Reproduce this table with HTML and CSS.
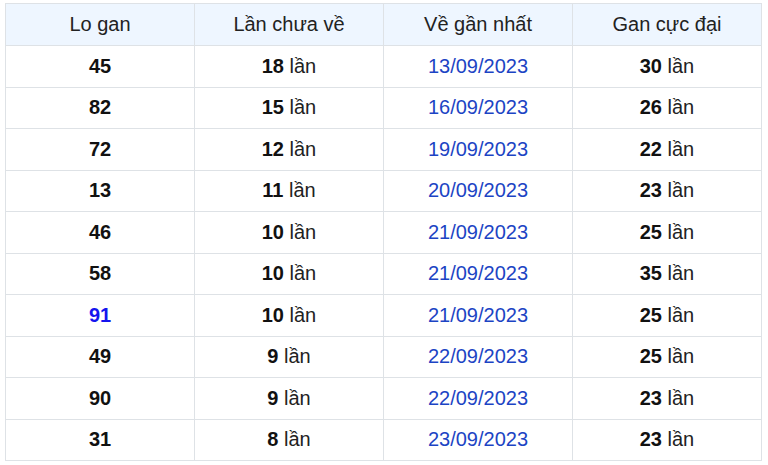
FILE: index.html
```html
<!DOCTYPE html>
<html>
<head>
<meta charset="utf-8">
<link rel="stylesheet" href="styles.css">
</head>
<body>
<div class="wrap">
<table class="gan">
<thead>
<tr><th>Lo gan</th><th>Lần chưa về</th><th>Về gần nhất</th><th>Gan cực đại</th></tr>
</thead>
<tbody>
<tr><td><b>45</b></td><td><b>18</b> lần</td><td class="date">13/09/2023</td><td><b>30</b> lần</td></tr>
<tr><td><b>82</b></td><td><b>15</b> lần</td><td class="date">16/09/2023</td><td><b>26</b> lần</td></tr>
<tr><td><b>72</b></td><td><b>12</b> lần</td><td class="date">19/09/2023</td><td><b>22</b> lần</td></tr>
<tr><td><b>13</b></td><td><b>11</b> lần</td><td class="date">20/09/2023</td><td><b>23</b> lần</td></tr>
<tr><td><b>46</b></td><td><b>10</b> lần</td><td class="date">21/09/2023</td><td><b>25</b> lần</td></tr>
<tr><td><b>58</b></td><td><b>10</b> lần</td><td class="date">21/09/2023</td><td><b>35</b> lần</td></tr>
<tr><td><b class="hot">91</b></td><td><b>10</b> lần</td><td class="date">21/09/2023</td><td><b>25</b> lần</td></tr>
<tr><td><b>49</b></td><td><b>9</b> lần</td><td class="date">22/09/2023</td><td><b>25</b> lần</td></tr>
<tr><td><b>90</b></td><td><b>9</b> lần</td><td class="date">22/09/2023</td><td><b>23</b> lần</td></tr>
<tr><td><b>31</b></td><td><b>8</b> lần</td><td class="date">23/09/2023</td><td><b>23</b> lần</td></tr>
</tbody>
</table>
</div>
</body>
</html>
```

FILE: styles.css
```css
html, body {
  margin: 0;
  padding: 0;
  background: #fff;
}
.wrap {
  padding: 3px 6px 0 5px;
}
.gan {
  width: 757px;
  border-collapse: collapse;
  table-layout: fixed;
  font-family: "Liberation Sans", Arial, sans-serif;
  font-size: 20px;
  color: #222;
}
.gan th, .gan td {
  border: 1px solid #dee2e6;
  text-align: center;
  padding: 0;
}
.gan th {
  font-weight: normal;
  background: #eef6ff;
  height: 41px;
}
.gan td {
  height: 40.5px;
}
.gan b {
  color: #111;
}
.gan .date {
  color: #1c44c4;
}
.gan b.hot {
  color: #1515ee;
}
```
